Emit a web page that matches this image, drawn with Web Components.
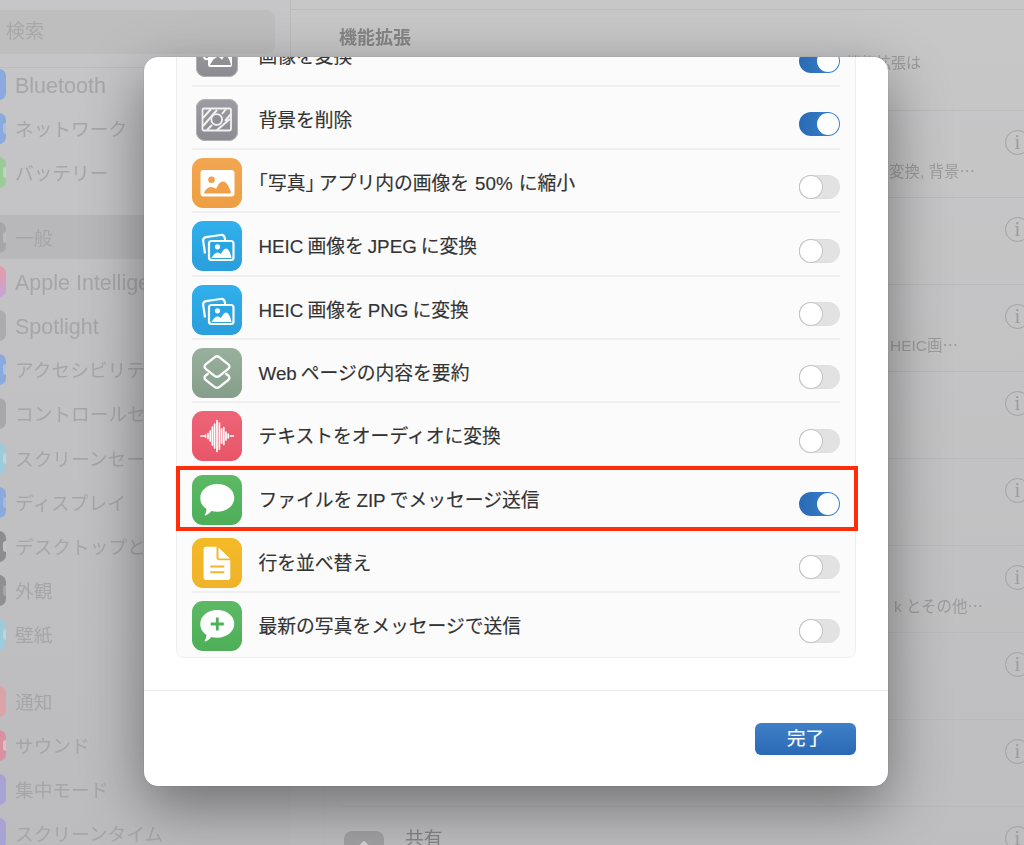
<!DOCTYPE html>
<html lang="ja">
<head>
<meta charset="utf-8">
<title>機能拡張</title>
<style>
	html, body { margin: 0; padding: 0; }
	body {
		width: 1024px;
		height: 845px;
		overflow: hidden;
		font-family: "Liberation Sans", "Noto Sans CJK JP", sans-serif;
	}
	/* 和欧文のあいだのアキと、半角にした括弧 */
	.r { margin-right: 4px; }
	.lr { margin: 0 4px; }
	.lrw { margin: 0 6px; }
	.h { font-feature-settings: "halt"; }
	.hr { font-feature-settings: "halt"; margin-right: 4px; }
</style>
</head>
<body>
<settings-window>
	<side-bar slot="side">
		<side-item color="#8aa9dc" latin>Bluetooth</side-item>
		<side-item color="#8aa9dc" mark="#a9c0e4">ネットワーク</side-item>
		<side-item color="#9bcb99" mark="#b9dab7" gap="20">バッテリー</side-item>
		<side-item color="#a6a6a8" mark="#bcbcbd" selected>一般</side-item>
		<side-item color="linear-gradient(#e69ba3, #c7a3d8)" latin>Apple Intelligence</side-item>
		<side-item color="#acacae" latin>Spotlight</side-item>
		<side-item color="#8aa9dc" mark="#a9c0e4">アクセシビリティ</side-item>
		<side-item color="#a8a8aa">コントロールセンター</side-item>
		<side-item color="#9dcbd9" mark="#b4d7e2">スクリーンセーバー</side-item>
		<side-item color="#8aa9dc" mark="#a3bbe2">ディスプレイ</side-item>
		<side-item color="#8d8d8f" mark="#c4c4c5">デスクトップとDock</side-item>
		<side-item color="#8f8f91" mark="#a5a5a7">外観</side-item>
		<side-item color="#9dcbd9" mark="#b4d7e2" gap="22">壁紙</side-item>
		<side-item color="#dba3a6">通知</side-item>
		<side-item color="#d991a1" mark="#e4bcc5">サウンド</side-item>
		<side-item color="#a8a3d4">集中モード</side-item>
		<side-item color="#a8a3d4">スクリーンタイム</side-item>
	</side-bar>
	<main-pane slot="main" heading="機能拡張" note="機能拡張は">
		<pane-row sub="変換, 背景⋯" end="66"></pane-row>
		<pane-row></pane-row>
		<pane-row sub="HEIC画⋯" end="83"></pane-row>
		<pane-row></pane-row>
		<pane-row></pane-row>
		<pane-row sub="k とその他⋯" end="58"></pane-row>
		<pane-row></pane-row>
		<pane-row></pane-row>
		<pane-row title="共有"></pane-row>
	</main-pane>
</settings-window>

<ext-dialog>
	<ext-item icon="convert" small on>画像を変換</ext-item>
	<ext-item icon="cutout" small on>背景を削除</ext-item>
	<ext-item icon="photo"><span class="h">「</span>写真<span class="hr">」</span>アプリ内の画像を<span class="lrw">50%</span>に縮小</ext-item>
	<ext-item icon="stack"><span class="r">HEIC</span>画像を<span class="lr">JPEG</span>に変換</ext-item>
	<ext-item icon="stack"><span class="r">HEIC</span>画像を<span class="lr">PNG</span>に変換</ext-item>
	<ext-item icon="shortcut"><span class="r">Web</span>ページの内容を要約</ext-item>
	<ext-item icon="wave">テキストをオーディオに変換</ext-item>
	<ext-item icon="message" on>ファイルを<span class="lr">ZIP</span>でメッセージ送信</ext-item>
	<ext-item icon="file">行を並べ替え</ext-item>
	<ext-item icon="plus">最新の写真をメッセージで送信</ext-item>
</ext-dialog>

<script>
	class SettingsWindow extends HTMLElement {
		constructor() {
			super();
			this.attachShadow({ mode: 'open' });
		}

		connectedCallback() {
			this.shadowRoot.innerHTML = `
				<style>
					:host {
						display: grid;
						grid-template-columns: 291px 1fr;
						width: 1024px;
						height: 845px;
						overflow: hidden;
						background: #c7c6c7;
					}
				</style>
				<slot name="side"></slot>
				<slot name="main"></slot>
			`;
		}
	}

	class SideBar extends HTMLElement {
		constructor() {
			super();
			this.attachShadow({ mode: 'open' });
		}

		connectedCallback() {
			this.shadowRoot.innerHTML = `
				<style>
					:host {
						display: block;
						height: 845px;
						overflow: hidden;
						box-sizing: border-box;
						border-right: 1px solid #bdbcbd;
						background: linear-gradient(#c6c5c7, #bcbbbe);
						filter: blur(.5px);
					}
					.top {
						height: 68px;
						box-sizing: border-box;
						padding-top: 10px;
						border-bottom: 1px solid #bcbbbc;
					}
					.search {
						width: 275px;
						height: 44px;
						box-sizing: border-box;
						padding-left: 6px;
						border-radius: 0 8px 8px 0;
						background: #bfbebf;
						color: #a8a8a9;
						font-size: 19px;
						line-height: 44px;
					}
					.list {
						margin-top: -5.500px;
					}
				</style>
				<div class="top"><div class="search">検索</div></div>
				<div class="list"><slot></slot></div>
			`;
		}
	}

	class SideItem extends HTMLElement {
		constructor() {
			super();
			this.attachShadow({ mode: 'open' });
		}

		connectedCallback() {
			const color = this.getAttribute('color');
			const mark = this.getAttribute('mark');
			const latin = this.hasAttribute('latin');
			this.shadowRoot.innerHTML = `
				<style>
					:host {
						display: flex;
						align-items: center;
						gap: 9px;
						height: 44.2px;
						margin-left: -25px;
						margin-bottom: ${this.getAttribute('gap') || 0}px;
						color: #a6a6a7;
						font-size: ${latin ? 21.5 : 18.7}px;
						white-space: nowrap;
						background: ${this.hasAttribute('selected') ? '#b8b7b9' : 'none'};
					}
					.tile {
						display: flex;
						align-items: center;
						justify-content: flex-end;
						flex: none;
						width: 31px;
						height: 31px;
						border-radius: 7px;
						background: ${color};
					}
					.tile i {
						width: 3px;
						height: 11px;
						border-radius: 3px 0 0 3px;
						background: ${mark || 'none'};
					}
					.label {
						${latin ? 'margin-top: 3.500px;' : 'margin-bottom: 2px;'}
					}
				</style>
				<span class="tile"><i></i></span>
				<span class="label"><slot></slot></span>
			`;
		}
	}

	class MainPane extends HTMLElement {
		constructor() {
			super();
			this.attachShadow({ mode: 'open' });
		}

		connectedCallback() {
			this.shadowRoot.innerHTML = `
				<style>
					:host {
						display: block;
						height: 845px;
						overflow: hidden;
						box-sizing: border-box;
						padding-top: 9px;
						background: linear-gradient(#c8c7c8, #bebdbf);
						filter: blur(.5px);
					}
					.head {
						border-top: 1px solid #bcbbbc;
						height: 101px;
						box-sizing: border-box;
						padding: 16px 0 0 48px;
					}
					h1 {
						margin: 0;
						color: #858585;
						font-size: 18px;
						font-weight: 700;
						line-height: 24px;
					}
					.note {
						width: 582px;
						margin-top: 2px;
						color: #9a9a9b;
						font-size: 15px;
						line-height: 22px;
						text-align: right;
					}
					.card {
						width: 760px;
						margin-left: 32px;
						box-sizing: border-box;
						border-top: 1px solid #bcbbbc;
						border-left: 1px solid #bcbbbc;
					}
				</style>
				<div class="head">
					<h1>${this.getAttribute('heading')}</h1>
					<div class="note">${this.getAttribute('note')}</div>
				</div>
				<div class="card"><slot></slot></div>
			`;
		}
	}

	class PaneRow extends HTMLElement {
		constructor() {
			super();
			this.attachShadow({ mode: 'open' });
		}

		connectedCallback() {
			const title = this.getAttribute('title');
			const sub = this.getAttribute('sub');
			const end = this.getAttribute('end') || 0;
			this.shadowRoot.innerHTML = `
				<style>
					:host {
						display: block;
						height: 87px;
						box-sizing: border-box;
						margin-left: 16px;
						padding: 18px 0 0 4px;
						width: 701px;
						border-bottom: 1px solid #b9b8ba;
					}
					.top {
						display: flex;
						align-items: center;
						height: 27px;
					}
					.share {
						display: flex;
						align-items: center;
						justify-content: center;
						width: 40px;
						height: 40px;
						margin: 24px 21px 0 0;
						border-radius: 8px;
						background: #a2a2a4;
					}
					.title {
						flex: 1;
						color: #858585;
						font-size: 18.7px;
						line-height: 26px;
					}
					.info {
						display: flex;
						align-items: center;
						justify-content: center;
						flex: none;
						width: 25px;
						height: 25px;
						margin-right: 11px;
						box-sizing: border-box;
						border: 1.8px solid #a2a2a3;
						border-radius: 50%;
						color: #9c9c9d;
						font-family: "Liberation Serif", serif;
						font-size: 21px;
						line-height: 1;
					}
					.sub {
						margin-top: 5px;
						padding-right: ${end}px;
						color: #9b9b9c;
						font-size: 15.500px;
						line-height: 22px;
						text-align: right;
					}
				</style>
				<div class="top">
					${title ? `<span class="share"><svg width="20" height="24" viewBox="0 0 20 24" fill="none" stroke="#d5d5d6" stroke-width="2" stroke-linecap="round" stroke-linejoin="round"><path d="M10 15V3M5.500 7.500 10 3l4.500 4.500"/></svg></span>` : ''}
					<span class="title">${title || ''}</span>
					<span class="info">i</span>
				</div>
				${sub ? `<div class="sub">${sub}</div>` : ''}
			`;
		}
	}

	class ExtDialog extends HTMLElement {
		constructor() {
			super();
			this.attachShadow({ mode: 'open' });
		}

		connectedCallback() {
			this.shadowRoot.innerHTML = `
				<style>
					:host {
						display: flex;
						flex-direction: column;
						position: absolute;
						left: 144px;
						top: 57px;
						width: 744px;
						height: 729px;
						border-radius: 14px;
						background: #fff;
						box-shadow: 0 0 1px rgba(0, 0, 0, .35), 0 20px 60px rgba(0, 0, 0, .42);
					}
					.body {
						height: 633px;
						flex: none;
						overflow: hidden;
						border-radius: 14px 14px 0 0;
						padding: 0 32px;
						border-bottom: 1px solid #ececec;
					}
					.list {
						margin-top: -34.600px;
						border: 1px solid #eeeeef;
						border-radius: 8px;
						background: #fbfbfc;
					}
					.foot {
						display: flex;
						justify-content: flex-end;
						padding: 32px 32px 0 0;
					}
					button {
						width: 101px;
						height: 32px;
						padding: 0;
						border: 0;
						border-radius: 6px;
						background: linear-gradient(#3f80c8, #2b69b4);
						color: #fff;
						font-family: inherit;
						font-size: 18.500px;
						line-height: 30px;
						-webkit-text-stroke: .2px #fff;
					}
					.mark {
						position: absolute;
						left: 32px;
						top: 409px;
						width: 682px;
						height: 65px;
						box-sizing: border-box;
						border: 4px solid #ff2d0a;
					}
				</style>
				<div class="body"><div class="list"><slot></slot></div></div>
				<div class="foot"><button>完了</button></div>
				<div class="mark"></div>
			`;
		}
	}

	class ExtItem extends HTMLElement {
		constructor() {
			super();
			this.attachShadow({ mode: 'open' });
		}

		connectedCallback() {
			const small = this.hasAttribute('small');
			this.shadowRoot.innerHTML = `
				<style>
					:host {
						display: flex;
						align-items: flex-start;
						height: 63.33px;
						box-sizing: border-box;
						margin: 0 15px;
						color: #333;
						font-size: 18.800px;
						white-space: nowrap;
						-webkit-text-stroke: .15px #333;
					}
					:host(:not(:last-of-type)) {
						border-bottom: 2px solid #f0f0f1;
					}
					app-icon {
						margin-top: ${small ? 12 : 8}px;
					}
					.label {
						flex: 1;
						margin: 22px 0 0 16.500px;
						line-height: 24px;
					}
					ext-toggle {
						margin-top: 25.400px;
					}
				</style>
				<app-icon name="${this.getAttribute('icon')}"></app-icon>
				<span class="label"><slot></slot></span>
				<ext-toggle ${this.hasAttribute('on') ? 'on' : ''}></ext-toggle>
			`;
		}
	}

	class ExtToggle extends HTMLElement {
		constructor() {
			super();
			this.attachShadow({ mode: 'open' });
		}

		connectedCallback() {
			const on = this.hasAttribute('on');
			this.shadowRoot.innerHTML = `
				<style>
					:host {
						display: flex;
						justify-content: ${on ? 'flex-end' : 'flex-start'};
						flex: none;
						width: 41px;
						height: 24px;
						box-sizing: border-box;
						padding: 1px;
						border-radius: 12px;
						background: ${on ? 'linear-gradient(90deg, #2a6ab4, #3a84d0)' : '#e2e2e3'};
						box-shadow: ${on ? 'none' : 'inset 1px 0 1px #c4c4c5'};
					}
					i {
						width: 22px;
						height: 22px;
						border-radius: 50%;
						background: #fff;
						box-shadow: ${on ? 'none' : '0 0 0 1px #c4c4c5'};
					}
				</style>
				<i></i>
			`;
		}
	}

	// 50x50 のタイル。灰色の2つだけ 42x42
	const ICONS = {
		convert: {
			size: 42,
			bg: ['#9c9ca2', '#8b8b91'],
			art: `<rect x="7" y="6" width="22" height="17" rx="2.500" transform="rotate(-8 18 14)" fill="none" stroke="#fff" stroke-width="2"/>
				<rect x="12" y="12" width="24" height="20" rx="2.500" fill="#fff"/>
				<circle cx="21" cy="18" r="2.400" fill="#8f8f95"/>
				<path d="M14 30c3-6 6-8 8-8s3 2 4 3c1-2 2-4 4-4s4 5 5 9z" fill="#8f8f95"/>`
		},
		cutout: {
			size: 42,
			bg: ['#9c9ca2', '#8b8b91'],
			art: `<rect x="6.500" y="9.500" width="28.500" height="22" rx="1.500" fill="none" stroke="#f1f1f2" stroke-width="1.800"/>
				<path d="M7 19 15 10M7 27 21 11M11 31 16 26M26 15 30 10M29 22 35 15M21 31 34 20" stroke="#f1f1f2" stroke-width="2" fill="none"/>
				<circle cx="20.700" cy="20.500" r="5.400" fill="#8f8f95" stroke="#f1f1f2" stroke-width="1.800"/>`
		},
		photo: {
			bg: ['#f2a650', '#ee9f43'],
			art: `<rect x="8.500" y="12" width="34" height="26.500" rx="3" fill="#fff"/>
				<circle cx="19.500" cy="21.800" r="3.300" fill="#f0a048"/>
				<path d="M12 35.500c1-3.500 3.500-6.500 7-6.500 2 0 3.700 1 5 2 2-4 4-7.500 7-7.500 4 0 6.500 6.500 8 10.500 0 .8-.5 1.500-1.500 1.500z" fill="#f0a048"/>`
		},
		stack: {
			bg: ['#2fb0ec', '#2a9fdc'],
			art: `<path d="M13 32.500 11.200 20.200c-.3-2 1-3.700 2.900-4l14.500-2.200c2-.3 3.800 1 4.200 3l.4 2" fill="none" stroke="#fff" stroke-width="2.200"/>
				<rect x="17" y="20" width="24.500" height="19" rx="2.500" fill="#2aa5e3" stroke="#fff" stroke-width="2.200"/>
				<circle cx="25.500" cy="25.800" r="2.600" fill="#fff"/>
				<path d="M19.500 37c2-3.500 4-5.500 6-5.500 1.500 0 2.500 .8 3.500 1.500 1.500-3 3-5.500 5-5.500 2.500 0 4.500 4.500 5.500 9.500z" fill="#fff"/>`
		},
		shortcut: {
			bg: ['#9ab09e', '#849e89'],
			art: `<g fill="none" stroke="#fff" stroke-width="2.300" stroke-linejoin="round" stroke-linecap="round">
				<path d="M22.500 9.300a4 4 0 0 1 5 0l8.800 7a2.800 2.800 0 0 1 0 4.500l-8.800 7a4 4 0 0 1-5 0l-8.800-7a2.800 2.800 0 0 1 0-4.500z"/>
				<path d="M15.800 26 13.700 27.500a2.800 2.800 0 0 0 0 4.500l8.800 6.800a4 4 0 0 0 5 0l8.800-6.800a2.800 2.800 0 0 0 0-4.500l-2.100-1.500"/></g>`
		},
		wave: {
			bg: ['#ee6477', '#e75668'],
			art: `<g stroke="#fff" stroke-width="1.700" stroke-linecap="round">
				<path d="M9 25h3M13.500 24v2M16 22.500v5M18.200 20v10M20.400 16v18M22.600 13v24M25 9.500v31M27.400 12v26M29.600 18v14M31.800 16.500v17M34 21v8M36.200 23v4M38.400 25h3"/></g>`
		},
		message: {
			bg: ['#5cb964', '#4eaf58'],
			art: `<path d="M25.300 9c9.500 0 17 6 17 13.800 0 7.900-7.500 13.900-17 13.900-2.100 0-4-.3-5.900-.8-1.700 2-4 3.800-6 4.500-.6 .2-.9-.3-.6-.8 1-1.600 1.700-3.600 1.600-5.800-4.300-2.500-6.100-6.500-6.100-11 0-7.800 7.500-13.800 17-13.800z" fill="#fff"/>`
		},
		file: {
			bg: ['#f4ba26', '#efb32a'],
			art: `<path d="M14 8.700h10.500v11c0 1.500 1 2.500 2.500 2.500h11.300v17.300c0 1.500-1 2.500-2.500 2.500H14c-1.500 0-2.400-1-2.400-2.500V11.200c0-1.500 .9-2.500 2.400-2.500z" fill="#fff"/>
				<path d="M26.500 9.500 38 20.500H27.500c-.6 0-1-.4-1-1z" fill="#fff"/>
				<path d="M18.300 28.500h14M18.300 34.300h14" stroke="#f2b52c" stroke-width="2"/>`
		},
		plus: {
			bg: ['#5cb964', '#4eaf58'],
			art: `<path d="M25.300 9c9.500 0 17 6 17 13.800 0 7.900-7.500 13.900-17 13.900-2.100 0-4-.3-5.900-.8-1.700 2-4 3.800-6 4.500-.6 .2-.9-.3-.6-.8 1-1.600 1.700-3.600 1.600-5.800-4.300-2.500-6.100-6.500-6.100-11 0-7.800 7.500-13.800 17-13.800z" fill="#fff"/>
				<path d="M25.300 16.500v13M18.800 23h13" stroke="#4fb059" stroke-width="2.800"/>`
		}
	};

	class AppIcon extends HTMLElement {
		constructor() {
			super();
			this.attachShadow({ mode: 'open' });
		}

		connectedCallback() {
			const icon = ICONS[this.getAttribute('name')];
			const size = icon.size || 50;
			this.shadowRoot.innerHTML = `
				<style>
					:host {
						display: flex;
						justify-content: center;
						flex: none;
						width: 50px;
					}
					.tile {
						display: block;
						width: ${size}px;
						height: ${size}px;
						border-radius: ${size === 50 ? 11 : 9}px;
						background: linear-gradient(${icon.bg[0]}, ${icon.bg[1]});
						box-shadow: ${size === 50 ? 'none' : 'inset 0 0 0 1px #b2b2b6'};
					}
				</style>
				<svg class="tile" viewBox="0 0 ${size} ${size}">${icon.art}</svg>
			`;
		}
	}

	customElements.define('settings-window', SettingsWindow);
	customElements.define('side-bar', SideBar);
	customElements.define('side-item', SideItem);
	customElements.define('main-pane', MainPane);
	customElements.define('pane-row', PaneRow);
	customElements.define('ext-dialog', ExtDialog);
	customElements.define('ext-item', ExtItem);
	customElements.define('ext-toggle', ExtToggle);
	customElements.define('app-icon', AppIcon);
</script>
</body>
</html>
